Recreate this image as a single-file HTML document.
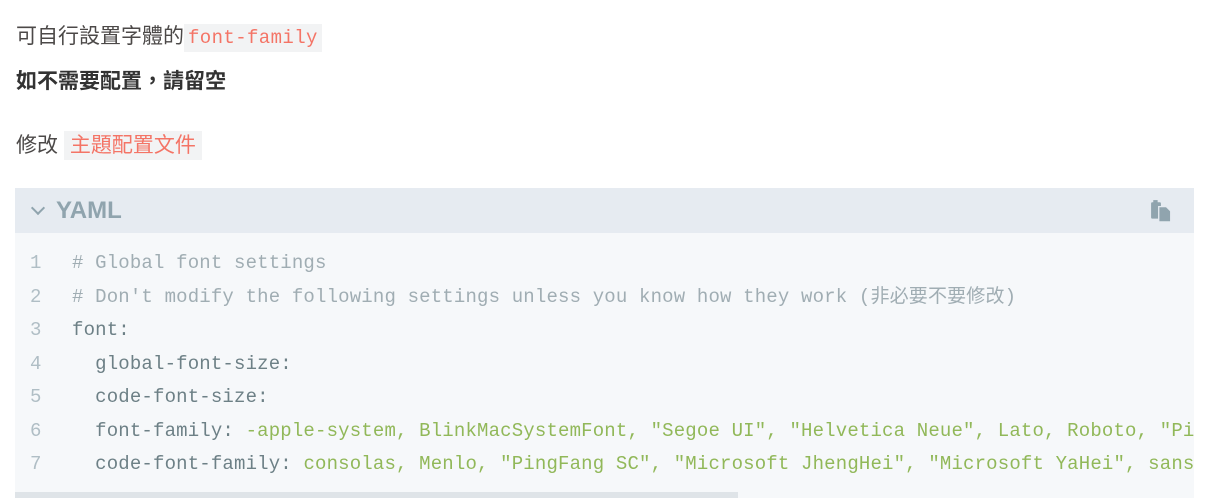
<!DOCTYPE html>
<html><head><meta charset="utf-8"><style>
body{margin:0;background:#fff;width:1220px;height:503px;overflow:hidden;font-family:"Liberation Sans","Noto Sans CJK TC",sans-serif;color:#4c4948;font-size:21px}
.p{position:absolute;left:16px;white-space:nowrap}
.ic{font-family:"Liberation Mono","Noto Sans CJK TC",monospace;color:#f47466;background:#f2f3f4;padding:3px 4px;font-size:19px;letter-spacing:0.4px}
.ic2{color:#f47466;background:#f2f3f4;padding:3px 6px}
.blk{position:absolute;left:15px;top:188px;width:1179px;height:310px;background:#f6f8fa;overflow:hidden}
.hd{height:45px;background:#e6ebf1;position:relative}
.hd span{position:absolute;left:41px;top:9px;font-weight:bold;font-size:24px;color:#90a4ae}
.chev{position:absolute;left:18px;top:15px;width:8px;height:8px;border-right:2.5px solid #90a4ae;border-bottom:2.5px solid #90a4ae;transform:rotate(45deg)}
.code{position:absolute;top:59px;left:0;font-family:"Liberation Mono","Noto Sans CJK TC",monospace;font-size:19px;letter-spacing:0.17px;line-height:33.5px;white-space:pre;color:#6d8086}
.ln{position:absolute;left:15px;color:#b0bec5}
.tx{position:absolute;left:57px}
.c{color:#a0adb3}.g{color:#91b859}
.sb{position:absolute;left:0;top:304px;width:723px;height:6px;background:#dfe4e8}
</style></head><body>
<div class="p" style="top:20px">可自行設置字體的<span class="ic">font-family</span></div>
<div class="p" style="top:65px;font-weight:bold;color:#333">如不需要配置，請留空</div>
<div class="p" style="top:129px">修改 <span class="ic2">主題配置文件</span></div>
<div class="blk">
<div class="hd"><div class="chev"></div><span>YAML</span>
<svg style="position:absolute;left:1135px;top:11px" width="24" height="24" viewBox="0 0 22 22"><rect x="1" y="3" width="9" height="15" rx="1" fill="#90a4ae"/><rect x="3" y="1" width="4" height="3" fill="#90a4ae"/><path d="M8 7h7l4 4v10H8z" fill="#90a4ae" stroke="#e6ebf1" stroke-width="1.2"/></svg></div>
<div class="code"><div class="ln">1
2
3
4
5
6
7</div><div class="tx"><span class="c"># Global font settings</span>
<span class="c"># Don't modify the following settings unless you know how they work (非必要不要修改)</span>
font:
  global-font-size:
  code-font-size:
  font-family: <span class="g">-apple-system, BlinkMacSystemFont, "Segoe UI", "Helvetica Neue", Lato, Roboto, "PingFang SC"</span>
  code-font-family: <span class="g">consolas, Menlo, "PingFang SC", "Microsoft JhengHei", "Microsoft YaHei", sans-serif</span></div></div>
<div class="sb"></div>
</div>
</body></html>
